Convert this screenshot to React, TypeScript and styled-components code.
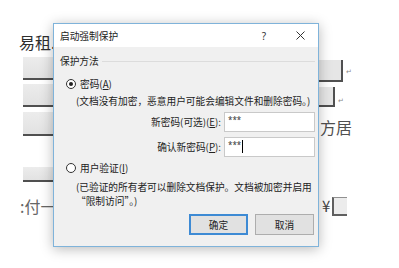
import React from "react";
import styled, { createGlobalStyle } from "styled-components";

const Global = createGlobalStyle`
  html, body { margin: 0; padding: 0; background: #fff; }
  body {
    width: 399px; height: 268px; overflow: hidden;
    font-family: "Noto Sans CJK SC", "Noto Sans", sans-serif;
  }
`;

const Page = styled.div`
  position: relative;
  width: 399px;
  height: 268px;
  overflow: hidden;
  background: #fff;
`;

/* ---------- background document ---------- */
const Doc = styled.div`
  display: flex;
  flex-direction: column;
`;

const Row = styled.div<{ $mt: number; $h: number }>`
  display: flex;
  margin-top: ${(p) => p.$mt}px;
  height: ${(p) => p.$h}px;
`;

const LeftCell = styled.div<{ $pl?: number }>`
  width: 318px;
  padding-left: ${(p) => p.$pl ?? 23}px;
  box-sizing: border-box;
  display: flex;
  align-items: flex-start;
`;

const RightCell = styled.div`
  flex: 1;
  display: flex;
  align-items: flex-start;
`;

const Band = styled.div<{ $h: number; $line?: boolean }>`
  width: 100%;
  height: ${(p) => p.$h}px;
  box-sizing: border-box;
  background: linear-gradient(180deg, #ececec 0%, #e2e2e2 100%);
  border-bottom: ${(p) => (p.$line === false ? "none" : "2px solid #505050")};
`;

const DocText = styled.span<{ $color: string; $size?: number }>`
  font-family: "Noto Sans CJK SC", serif;
  font-size: ${(p) => p.$size ?? 16}px;
  line-height: 18px;
  color: ${(p) => p.$color};
  white-space: nowrap;
`;

const Bracket = styled.div<{ $w: number; $h: number; $mt: number }>`
  width: ${(p) => p.$w}px;
  height: ${(p) => p.$h}px;
  margin-top: ${(p) => p.$mt}px;
  box-sizing: border-box;
  background: #e6e6e6;
  border-right: 2px solid #505050;
  border-bottom: 2px solid #505050;
`;

const OpenBox = styled.div`
  width: 15px;
  height: 19px;
  margin-left: 2px;
  box-sizing: border-box;
  background: #ececec;
  border-left: 2px solid #606060;
  border-bottom: 2px solid #606060;
  border-top: 1px solid #909090;
`;

const Mark = styled.span<{ $mt: number }>`
  font-size: 7px;
  line-height: 8px;
  color: #8a8a8a;
  margin-top: ${(p) => p.$mt}px;
  margin-left: 3px;
`;

/* ---------- dialog ---------- */
const Dialog = styled.div`
  position: absolute;
  left: 53px;
  top: 23px;
  width: 266px;
  height: 224px;
  box-sizing: border-box;
  border: 1px solid #7fb3da;
  background: #f0f0f0;
  box-shadow: 0 2px 12px rgba(0, 0, 0, 0.28);
  display: flex;
  flex-direction: column;
  font-size: 9.7px;
  color: #222;
`;

const TitleBar = styled.div`
  height: 23px;
  background: #fff;
  display: flex;
  align-items: center;
  padding-left: 6px;
`;

const Title = styled.div`
  flex: 1;
  line-height: 12px;
`;

const TitleButton = styled.div`
  width: 36px;
  height: 23px;
  display: flex;
  align-items: center;
  justify-content: center;
  color: #333;
  font-family: "Noto Sans", sans-serif;
  font-size: 10px;
`;

const Body = styled.div`
  flex: 1;
  padding-left: 6px;
  display: flex;
  flex-direction: column;
`;

const GroupHeader = styled.div`
  display: flex;
  align-items: center;
  gap: 3px;
  margin-top: 8px;
  height: 12px;
  margin-right: 3px;
`;

const GroupLine = styled.div`
  flex: 1;
  height: 1px;
  background: #dcdcdc;
`;

const RadioRow = styled.div<{ $mt: number }>`
  display: flex;
  align-items: center;
  height: 12px;
  margin-top: ${(p) => p.$mt}px;
  padding-left: 6px;
  gap: 4px;
`;

const RadioCircle = styled.div`
  width: 10px;
  height: 10px;
  box-sizing: border-box;
  border: 1px solid #333;
  border-radius: 50%;
  background: #fff;
  display: flex;
  align-items: center;
  justify-content: center;
`;

const RadioDot = styled.div`
  width: 4px;
  height: 4px;
  border-radius: 50%;
  background: #222;
`;

const Desc = styled.div<{ $mt: number }>`
  margin-top: ${(p) => p.$mt}px;
  padding-left: 16px;
  line-height: 14px;
  white-space: nowrap;
`;

const FieldRow = styled.div<{ $mt: number }>`
  display: flex;
  justify-content: flex-end;
  align-items: center;
  gap: 3px;
  height: 20px;
  padding-right: 3px;
  margin-top: ${(p) => p.$mt}px;
`;

const FieldLabel = styled.span`
  line-height: 12px;
  white-space: nowrap;
`;

const Input = styled.div`
  width: 91px;
  height: 20px;
  box-sizing: border-box;
  border: 1px solid #c9c9c9;
  background: #fff;
  padding: 2px 0 0 3px;
  display: flex;
  align-items: flex-start;
  font-family: "Noto Sans", sans-serif;
  font-size: 8px;
  line-height: 9px;
  color: #333;
`;

const Caret = styled.span`
  display: inline-block;
  width: 1px;
  height: 13px;
  margin-left: 1px;
  background: #000;
`;

const ButtonRow = styled.div`
  display: flex;
  justify-content: flex-end;
  gap: 7px;
  margin-top: 6px;
  padding-right: 4px;
`;

const Button = styled.div<{ $focused?: boolean }>`
  width: 59px;
  height: 21px;
  box-sizing: border-box;
  display: flex;
  align-items: center;
  justify-content: center;
  background: #e1e1e1;
  border: ${(p) => (p.$focused ? "2px solid #3d8ad4" : "1px solid #adadad")};
`;

const U = styled.span`
  text-decoration: underline;
  text-underline-offset: 1px;
`;

const CloseIcon = () => (
  <svg width="9" height="9" viewBox="0 0 9 9">
    <path d="M0.5 0.5 L8.5 8.5 M8.5 0.5 L0.5 8.5" stroke="#333" strokeWidth="1" fill="none" />
  </svg>
);

export default function App() {
  return (
    <Page>
      <Global />
      <Doc>
        <Row $mt={33} $h={18}>
          <LeftCell $pl={19}>
            <DocText $color="#2e2e2e" $size={16}>易租.</DocText>
          </LeftCell>
        </Row>
        <Row $mt={6} $h={25}>
          <LeftCell>
            <Band $h={23} />
          </LeftCell>
          <RightCell>
            <Bracket $w={25} $h={22} $mt={3} />
            <Mark $mt={10}>↵</Mark>
          </RightCell>
        </Row>
        <Row $mt={2} $h={23}>
          <LeftCell>
            <Band $h={23} />
          </LeftCell>
          <RightCell>
            <Bracket $w={17} $h={20} $mt={3} />
            <Mark $mt={12}>↵</Mark>
          </RightCell>
        </Row>
        <Row $mt={5} $h={25}>
          <LeftCell>
            <Band $h={24} />
          </LeftCell>
          <RightCell>
            <DocText $color="#505050" $size={16} style={{ marginTop: 6, marginLeft: 2 }}>
              方居
            </DocText>
          </RightCell>
        </Row>
        <Row $mt={30} $h={15}>
          <LeftCell>
            <Band $h={15} />
          </LeftCell>
        </Row>
        <Row $mt={15} $h={19}>
          <LeftCell $pl={20}>
            <DocText $color="#666" $size={16}>:付一</DocText>
          </LeftCell>
          <RightCell>
            <DocText $color="#444" $size={15} style={{ marginLeft: 4 }}>¥</DocText>
            <OpenBox />
          </RightCell>
        </Row>
      </Doc>

      <Dialog>
        <TitleBar>
          <Title>启动强制保护</Title>
          <TitleButton>?</TitleButton>
          <TitleButton>
            <CloseIcon />
          </TitleButton>
        </TitleBar>
        <Body>
          <GroupHeader>
            <span>保护方法</span>
            <GroupLine />
          </GroupHeader>
          <RadioRow $mt={11}>
            <RadioCircle>
              <RadioDot />
            </RadioCircle>
            <span>
              密码(<U>A</U>)
            </span>
          </RadioRow>
          <Desc $mt={4}>(文档没有加密，恶意用户可能会编辑文件和删除密码。)</Desc>
          <FieldRow $mt={4}>
            <FieldLabel>
              新密码(可选)(<U>E</U>):
            </FieldLabel>
            <Input>***</Input>
          </FieldRow>
          <FieldRow $mt={5}>
            <FieldLabel>
              确认新密码(<U>P</U>):
            </FieldLabel>
            <Input>
              ***
              <Caret />
            </Input>
          </FieldRow>
          <RadioRow $mt={5}>
            <RadioCircle />
            <span>
              用户验证(<U>I</U>)
            </span>
          </RadioRow>
          <Desc $mt={6}>
            (已验证的所有者可以删除文档保护。文档被加密并启用
            <br />
            “限制访问”。)
          </Desc>
          <ButtonRow>
            <Button $focused>确定</Button>
            <Button>取消</Button>
          </ButtonRow>
        </Body>
      </Dialog>
    </Page>
  );
}
